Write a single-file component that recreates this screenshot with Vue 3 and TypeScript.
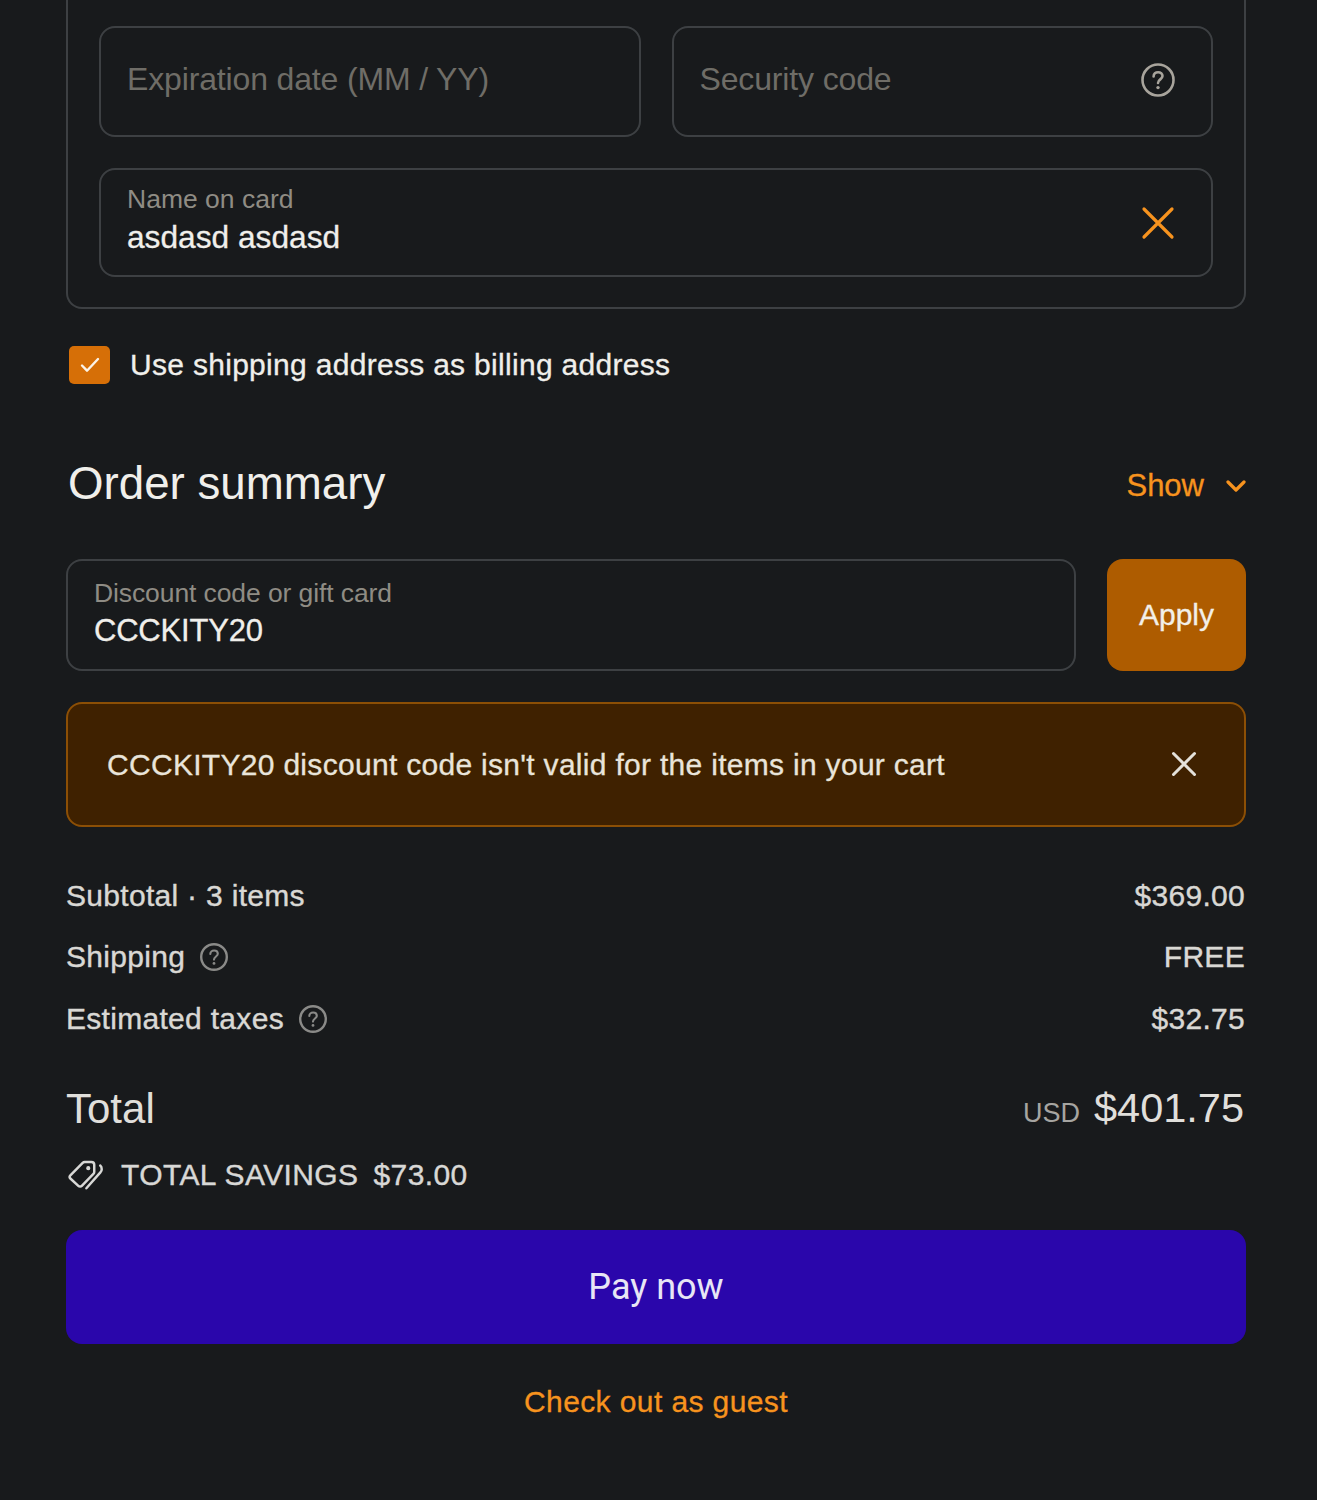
<template>
  <main class="checkout">
    <section class="card-box">
      <div class="field-row">
        <div class="field"><span class="placeholder">Expiration date (MM / YY)</span></div>
        <div class="field">
          <span class="placeholder">Security code</span>
          <svg class="field-icon help-big" viewBox="0 0 36 36" fill="none">
            <circle cx="18" cy="18" r="15.5" stroke="#a8a49c" stroke-width="2.6" />
            <path d="M13.6 14.4c0-2.6 2-4.2 4.5-4.2s4.4 1.5 4.4 3.8c0 3.4-4.5 3.4-4.5 7" stroke="#a8a49c" stroke-width="2.6" stroke-linecap="round" />
            <circle cx="18" cy="25.6" r="1.7" fill="#a8a49c" />
          </svg>
        </div>
      </div>
      <div class="field filled name-field">
        <div class="field-text">
          <label class="float-label">Name on card</label>
          <span class="value">asdasd asdasd</span>
        </div>
        <svg class="field-icon" viewBox="0 0 36 36" fill="none">
          <path d="M4 4l28 28M32 4L4 32" stroke="#f7931e" stroke-width="3.2" stroke-linecap="round" />
        </svg>
      </div>
    </section>

    <div class="billing-check">
      <span class="checkbox">
        <svg viewBox="0 0 20 16" fill="none">
          <path d="M2 8.5l5 5.2L18 2" stroke="#fbf3e8" stroke-width="2.4" stroke-linecap="round" stroke-linejoin="round" />
        </svg>
      </span>
      <span>Use shipping address as billing address</span>
    </div>

    <header class="summary-head">
      <h2>Order summary</h2>
      <button class="show-btn" type="button">
        Show
        <svg viewBox="0 0 20 14" fill="none">
          <path d="M2 3l8 8 8-8" stroke="#f7931e" stroke-width="3.2" stroke-linecap="round" stroke-linejoin="round" />
        </svg>
      </button>
    </header>

    <div class="discount-row">
      <div class="field filled discount-field">
        <div class="field-text">
          <label class="float-label">Discount code or gift card</label>
          <span class="value">{{ code }}</span>
        </div>
      </div>
      <button class="apply-btn" type="button">Apply</button>
    </div>

    <div class="error-banner">
      <span>{{ code }} discount code isn't valid for the items in your cart</span>
      <svg viewBox="0 0 26 26" fill="none">
        <path d="M2.5 2.5l21 21M23.5 2.5l-21 21" stroke="#e4e1da" stroke-width="3" stroke-linecap="round" />
      </svg>
    </div>

    <ul class="lines">
      <li v-for="line in lines" :key="line.label">
        <span class="line-label">
          {{ line.label }}
          <svg v-if="line.help" class="help" viewBox="0 0 30 30" fill="none">
            <circle cx="15" cy="15" r="12.8" stroke="#8a8a88" stroke-width="2.4" />
            <path d="M11.3 12c0-2.2 1.7-3.5 3.8-3.5s3.7 1.3 3.7 3.2c0 2.8-3.8 2.8-3.8 5.9" stroke="#8a8a88" stroke-width="2.1" stroke-linecap="round" />
            <circle cx="15" cy="21.4" r="1.4" fill="#8a8a88" />
          </svg>
        </span>
        <span class="line-price">{{ line.price }}</span>
      </li>
    </ul>

    <div class="total-row">
      <span class="total-label">Total</span>
      <span class="total-amount"><small>USD</small>$401.75</span>
    </div>

    <div class="savings">
      <svg viewBox="0 0 38 34" fill="none" stroke="#d8d8d6" stroke-width="2.6" stroke-linecap="round" stroke-linejoin="round">
        <path d="M2.5 17.5L15.5 4.2c.6-.6 1.3-.9 2.1-.9h7.2c1.6 0 2.9 1.3 2.9 2.9v7.6c0 .8-.3 1.5-.9 2.1L14.6 28.4c-1 1-2.7 1-3.7 0l-8.4-7.7c-.9-.9-.9-2.3 0-3.2z" />
        <path d="M34 7c1.2 1 1.6 2.3 1.6 3.8 0 1.3-.5 2.5-1.4 3.4L19.4 31" />
        <circle cx="21.4" cy="9.8" r="1.5" fill="#d8d8d6" stroke-width="1.4" />
      </svg>
      <span>TOTAL SAVINGS</span>
      <span>$73.00</span>
    </div>

    <button class="pay-btn" type="button">Pay now</button>
    <a class="guest-link" href="#">Check out as guest</a>
  </main>
</template>

<script setup lang="ts">
interface SummaryLine {
  label: string
  price: string
  help: boolean
}

const code = 'CCCKITY20'

const lines: SummaryLine[] = [
  { label: 'Subtotal · 3 items', price: '$369.00', help: false },
  { label: 'Shipping', price: 'FREE', help: true },
  { label: 'Estimated taxes', price: '$32.75', help: true }
]
</script>

<style>
html,
body {
  background: #181a1c;
}
</style>

<style scoped>
.checkout {
  box-sizing: border-box;
  width: 1317px;
  height: 1500px;
  padding: 0 71px 0 66px;
  background: #181a1c;
  color: #e4e2dd;
  font-family: "Liberation Sans", Arial, sans-serif;
  overflow: hidden;
}

.card-box {
  display: flex;
  flex-direction: column;
  gap: 31px;
  padding: 26px 31px 30px;
  border: 2px solid #3d4043;
  border-top: none;
  border-radius: 0 0 16px 16px;
}

.field-row {
  display: grid;
  grid-template-columns: 1fr 1fr;
  gap: 31px;
}

.field {
  display: flex;
  align-items: center;
  justify-content: space-between;
  box-sizing: border-box;
  height: 111px;
  padding: 0 35px 0 26px;
  border: 2px solid #3d4043;
  border-radius: 16px;
}

.name-field {
  height: 109px;
}

.placeholder {
  margin-bottom: 4px;
  color: #6f6d67;
  font-size: 32px;
  letter-spacing: -0.15px;
}

.field-icon {
  width: 36px;
  height: 36px;
  flex: none;
}

.help-big {
  margin-bottom: 3px;
}

.field-text {
  display: flex;
  flex-direction: column;
  gap: 6px;
  margin-bottom: 3px;
}

.name-field .field-text {
  margin-bottom: 6px;
}

.float-label {
  color: #8f8c84;
  font-size: 26.5px;
  line-height: 28px;
}

.discount-field .float-label {
  letter-spacing: -0.1px;
}

.value {
  color: #f0efeb;
  font-size: 31.7px;
  line-height: 36px;
  -webkit-text-stroke: 0.3px;
}

.discount-field .value {
  font-size: 31px;
  letter-spacing: -0.2px;
}

.billing-check {
  display: flex;
  align-items: center;
  gap: 20px;
  margin: 37px 0 0 3px;
  color: #f0efeb;
  font-size: 30px;
  line-height: 38px;
  letter-spacing: 0.3px;
  -webkit-text-stroke: 0.3px;
}

.checkbox {
  display: flex;
  align-items: center;
  justify-content: center;
  width: 41px;
  height: 38px;
  background: #d66f07;
  border-radius: 5px;
}

.checkbox svg {
  width: 20px;
  height: 16px;
}

.summary-head {
  display: flex;
  align-items: center;
  justify-content: space-between;
  height: 56px;
  margin: 71px 0 0 2px;
}

.summary-head h2 {
  margin: 2px 0 0;
  color: #f0efeb;
  font-size: 45.7px;
  font-weight: 400;
}

.show-btn {
  display: flex;
  align-items: center;
  gap: 22px;
  margin-top: 6px;
  padding: 0;
  background: none;
  border: none;
  color: #f7931e;
  font-family: inherit;
  font-size: 31px;
  -webkit-text-stroke: 0.3px;
}

.show-btn svg {
  width: 20px;
  height: 14px;
}

.discount-row {
  display: flex;
  gap: 31px;
  margin-top: 48px;
}

.discount-field {
  flex: 1;
  height: 112px;
}

.apply-btn {
  width: 139px;
  height: 112px;
  background: #ae5c00;
  border: none;
  border-radius: 16px;
  color: #f3efe8;
  font-family: inherit;
  font-size: 30px;
  -webkit-text-stroke: 0.3px;
}

.error-banner {
  display: flex;
  align-items: center;
  justify-content: space-between;
  box-sizing: border-box;
  height: 125px;
  margin-top: 31px;
  padding: 0 47px 0 39px;
  background: #3f2100;
  border: 2px solid #8c4f05;
  border-radius: 16px;
  color: #e9e4da;
  font-size: 30px;
  letter-spacing: 0.3px;
  -webkit-text-stroke: 0.3px;
}

.error-banner svg {
  width: 26px;
  height: 26px;
  margin-bottom: 2px;
}

.lines {
  display: flex;
  flex-direction: column;
  gap: 25px;
  margin: 51px 0 0;
  padding: 0 1px 0 0;
  list-style: none;
}

.lines li {
  display: flex;
  align-items: center;
  justify-content: space-between;
  height: 36px;
  color: #d9d8d4;
  font-size: 30px;
  letter-spacing: 0.3px;
  -webkit-text-stroke: 0.4px;
}

.lines li:last-child {
  margin-top: 1px;
}

.line-label {
  display: flex;
  align-items: center;
  gap: 14px;
}

.help {
  width: 30px;
  height: 30px;
}

.total-row {
  display: flex;
  align-items: center;
  justify-content: space-between;
  height: 50px;
  margin-top: 47px;
  padding-right: 2px;
  color: #e0dfdb;
}

.total-label {
  font-size: 42px;
}

.total-amount {
  margin-bottom: 2px;
  font-size: 41.5px;
}

.total-amount small {
  margin-right: 14px;
  color: #a6a5a1;
  font-size: 27px;
}

.savings {
  display: flex;
  align-items: center;
  gap: 15px;
  height: 40px;
  margin-top: 21px;
  color: #d8d8d6;
  font-size: 30px;
  letter-spacing: 0.4px;
  -webkit-text-stroke: 0.4px;
}

.savings svg {
  width: 36px;
  height: 34px;
  margin: 0 2px;
}

.pay-btn {
  display: block;
  width: 100%;
  height: 114px;
  margin-top: 35px;
  background: #2a06ab;
  border: none;
  border-radius: 16px;
  color: #e8e6f5;
  font-family: Roboto, sans-serif;
  font-size: 36px;
}

.guest-link {
  display: block;
  margin-top: 40px;
  color: #f7931e;
  font-size: 30px;
  line-height: 36px;
  letter-spacing: 0.4px;
  text-align: center;
  text-decoration: none;
  -webkit-text-stroke: 0.3px;
}
</style>
